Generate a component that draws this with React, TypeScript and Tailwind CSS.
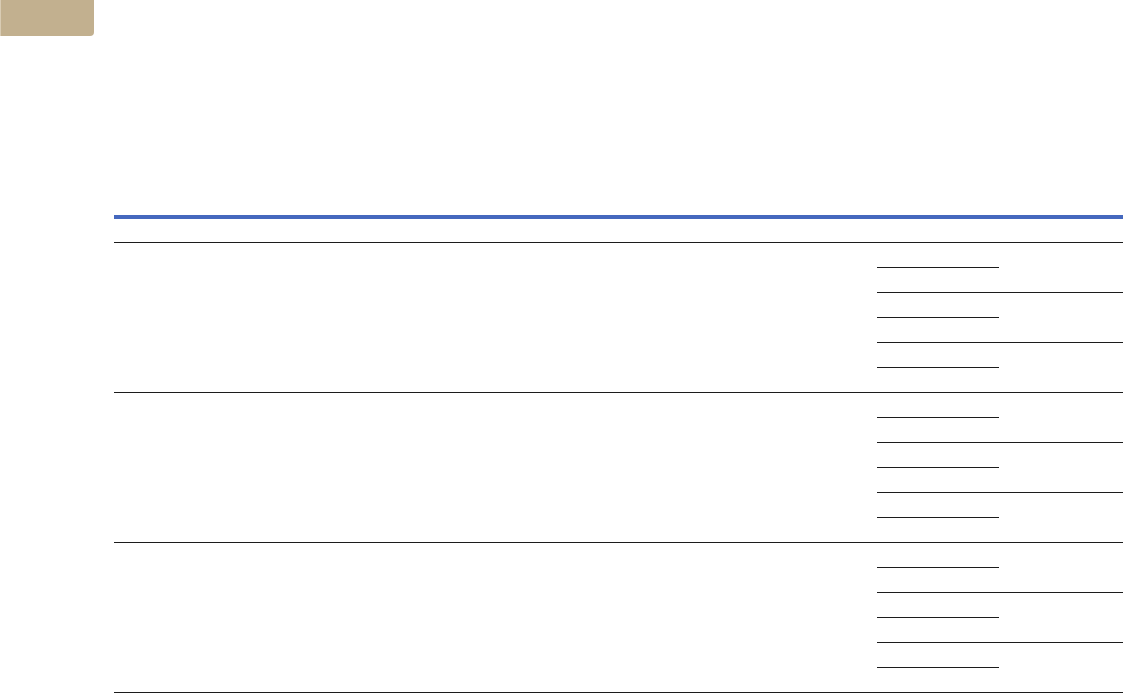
const groups = [0, 1, 2]
const cells = [0, 1, 2]

export default function App() {
  return (
    <div className="min-h-screen bg-white">
      <div className="h-9 w-[94px] rounded-br-sm border-l border-[#d9ccb4] bg-[#c2b08f]" />

      <div className="ml-[114px] mt-[179px]">
        <div className="h-1 bg-[#4568be]" />
        <div className="h-6 border-b border-[#1c1c1c]" />

        {groups.map((g) => (
          <div key={g} className="flex h-[150px] border-b border-[#1c1c1c]">
            <div className="w-[763px]" />
            <div className="flex flex-1 flex-col">
              {cells.map((c) => (
                <div
                  key={c}
                  className={c < 2 ? 'h-[50px] border-b border-[#1c1c1c]' : 'h-[49px]'}
                >
                  <div className="h-[25px] w-[122px] border-b border-[#1c1c1c]" />
                </div>
              ))}
            </div>
          </div>
        ))}
      </div>
    </div>
  )
}
